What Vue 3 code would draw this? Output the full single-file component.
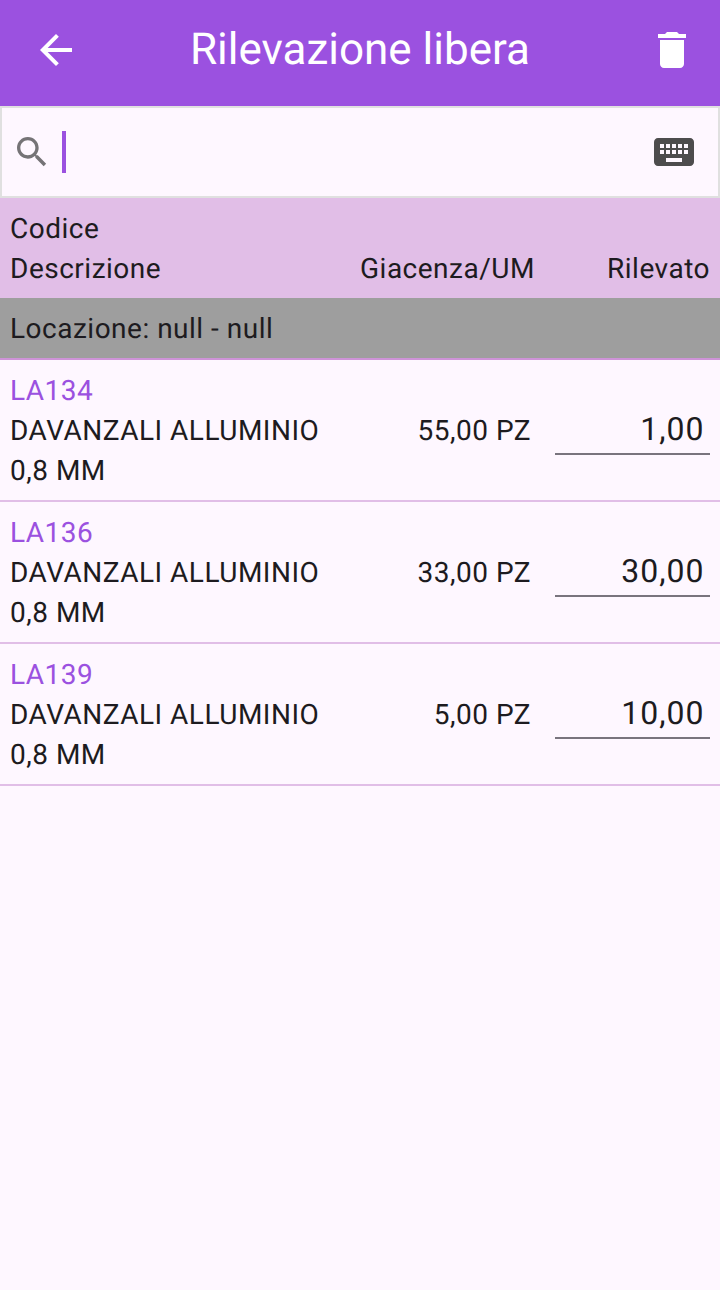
<script setup>
const rows = [
  { code: 'LA134', stock: '55,00 PZ', value: '1,00' },
  { code: 'LA136', stock: '33,00 PZ', value: '30,00' },
  { code: 'LA139', stock: '5,00 PZ', value: '10,00' },
]
</script>

<template>
  <main class="screen">
    <header class="bar">
      <svg class="icon" width="48" height="48" viewBox="0 0 24 24"><path d="M20 11H7.83l5.59-5.59L12 4l-8 8 8 8 1.41-1.41L7.83 13H20v-2z" /></svg>
      <h1>Rilevazione libera</h1>
      <svg class="icon" width="48" height="48" viewBox="0 0 24 24"><path d="M6 19c0 1.1.9 2 2 2h8c1.1 0 2-.9 2-2V7H6v12zM19 4h-3.500l-1-1h-5l-1 1H5v2h14V4z" /></svg>
    </header>
    <div class="search">
      <svg class="glass" width="40" height="40" viewBox="0 0 24 24"><path d="M15.500 14h-.79l-.28-.27C15.410 12.590 16 11.110 16 9.500 16 5.910 13.090 3 9.500 3S3 5.910 3 9.500 5.910 16 9.500 16c1.610 0 3.090-.59 4.230-1.570l.27.28v.79l5 4.990L20.490 19l-4.990-5zm-6 0C7.010 14 5 11.990 5 9.500S7.010 5 9.500 5 14 7.010 14 9.500 11.990 14 9.500 14z" /></svg>
      <span class="caret"></span>
      <svg class="keyboard" width="48" height="48" viewBox="0 0 24 24"><path d="M20 5H4c-1.100 0-1.990.9-1.990 2L2 17c0 1.100.9 2 2 2h16c1.100 0 2-.9 2-2V7c0-1.100-.9-2-2-2zm-9 3h2v2h-2V8zm0 3h2v2h-2v-2zM8 8h2v2H8V8zm0 3h2v2H8v-2zm-1 2H5v-2h2v2zm0-3H5V8h2v2zm9 7H8v-2h8v2zm0-4h-2v-2h2v2zm0-3h-2V8h2v2zm3 3h-2v-2h2v2zm0-3h-2V8h2v2z" /></svg>
    </div>
    <div class="heading">
      <div>Codice</div>
      <div class="labels"><span>Descrizione</span><span>Giacenza/UM</span><span>Rilevato</span></div>
    </div>
    <div class="location">Locazione: null - null</div>
    <article v-for="row in rows" :key="row.code" class="row">
      <div><div class="code">{{ row.code }}</div><div>DAVANZALI ALLUMINIO<br>0,8 MM</div></div>
      <div class="stock">{{ row.stock }}</div>
      <div class="value">{{ row.value }}</div>
    </article>
  </main>
</template>

<style>
body { background: #fef7ff; }
</style>
<style scoped>
.screen { box-sizing: border-box; min-height: 1290px; background: #fef7ff; color: #1d1b20; font: 28px/40px Roboto, sans-serif; letter-spacing: .5px; text-rendering: geometricPrecision; }
.bar { box-sizing: border-box; height: 106px; padding: 0 24px 6px 32px; background: #9b51e0; color: #fff; display: flex; align-items: center; justify-content: space-between; }
.icon { fill: currentColor; flex: none; }
h1 { margin: 0 8px 2px 0; font-size: 44px; line-height: 52px; font-weight: 400; letter-spacing: 0; }
.search { box-sizing: border-box; height: 92px; border: 2px solid #e0e0e0; padding: 0 20px 0 10px; display: flex; align-items: center; }
.glass { fill: #757376; }
.caret { width: 4px; height: 42px; background: #9b51e0; margin-left: 10px; }
.keyboard { fill: #4d4c4d; margin-left: auto; }
.heading { box-sizing: border-box; height: 100px; padding: 11px 10px 9px; background: #e1bee7; }
.labels { display: grid; grid-template-columns: 350px 1fr auto; }
.location { box-sizing: border-box; height: 62px; padding: 11px 10px 9px; background: #9e9e9e; border-bottom: 2px solid #ce93d8; }
.row { box-sizing: border-box; height: 142px; padding: 11px 10px 9px; display: grid; grid-template-columns: 360px 161px 155px; justify-content: space-between; border-bottom: 2px solid #e1bee7; }
.code { color: #9b51e0; }
.stock { align-self: center; text-align: right; padding-right: 12px; }
.value { box-sizing: border-box; margin-top: 35px; height: 49px; padding: 3px 5.500px 0 0; border-bottom: 2px solid #79747e; font-size: 32px; line-height: 40px; text-align: right; letter-spacing: 1px; }
</style>
